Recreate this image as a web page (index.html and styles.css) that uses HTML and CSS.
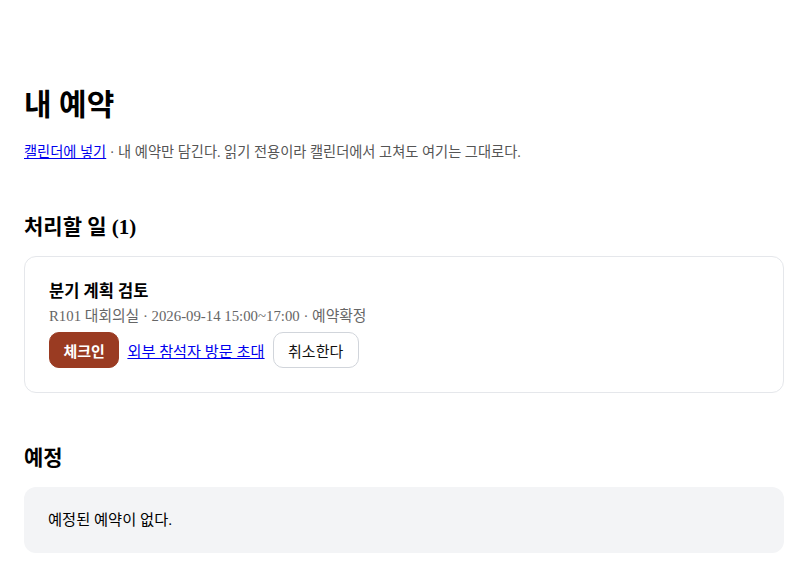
FILE: index.html
```html
<!DOCTYPE html>
<html lang="ko">
<head>
<meta charset="utf-8">
<title>내 예약</title>
<link rel="stylesheet" href="styles.css">
</head>
<body>
<main class="page">
  <h1 class="page-title">내 예약</h1>
  <p class="lead"><a href="#" class="link">캘린더에 넣기</a> · 내 예약만 담긴다. 읽기 전용이라 캘린더에서 고쳐도 여기는 그대로다.</p>

  <section class="section">
    <h2 class="section-title">처리할 일 (1)</h2>
    <div class="card">
      <h3 class="card-title">분기 계획 검토</h3>
      <p class="meta">R101 대회의실 · 2026-09-14 15:00~17:00 · 예약확정</p>
      <div class="actions">
        <button class="btn btn-primary" type="button">체크인</button>
        <a href="#" class="link action-link">외부 참석자 방문 초대</a>
        <button class="btn btn-outline" type="button">취소한다</button>
      </div>
    </div>
  </section>

  <section class="section">
    <h2 class="section-title">예정</h2>
    <div class="empty">예정된 예약이 없다.</div>
  </section>
</main>
</body>
</html>
```

FILE: styles.css
```css
html, body {
  margin: 0;
  padding: 0;
  background: #ffffff;
}
body {
  font-family: "Liberation Serif", "Noto Sans CJK SC", serif;
  font-size: 15px;
  color: #000;
}
.page {
  padding: 87px 24px 24px;
}
.page-title {
  font-size: 30px;
  line-height: 36px;
  font-weight: 700;
  margin: 0 0 19px;
}
.lead {
  font-size: 14.25px;
  line-height: 20px;
  color: #555;
  margin: 0;
}
.link {
  color: #0000ee;
  text-decoration: underline;
}
.section {
  margin-top: 51px;
}
.section-title {
  font-size: 21px;
  line-height: 28px;
  font-weight: 700;
  margin: 0 0 15px;
}
.card {
  border: 1px solid #e5e7eb;
  border-radius: 12px;
  padding: 24px;
}
.card-title {
  font-size: 16.5px;
  line-height: 21px;
  font-weight: 700;
  margin: 0 0 4px;
}
.meta {
  font-size: 14.8px;
  line-height: 20px;
  color: #666;
  margin: 0 0 6px;
}
.actions {
  display: flex;
  align-items: center;
  gap: 8px;
  font-size: 15px;
}
.action-link {
  font-size: 15.2px;
}
.btn {
  font-family: inherit;
  font-size: 15px;
  height: 36px;
  border-radius: 10px;
  cursor: pointer;
}
.btn-primary {
  padding: 0 13.5px;
  background: #9a3b22;
  color: #fff;
  border: 1px solid #9a3b22;
  font-weight: 700;
}
.btn-outline {
  padding: 0 14.5px;
  background: #fff;
  color: #111;
  border: 1px solid #d1d5db;
}
.empty {
  background: #f3f4f6;
  border-radius: 12px;
  padding: 24px;
  font-size: 15.3px;
  line-height: 18px;
}
```
